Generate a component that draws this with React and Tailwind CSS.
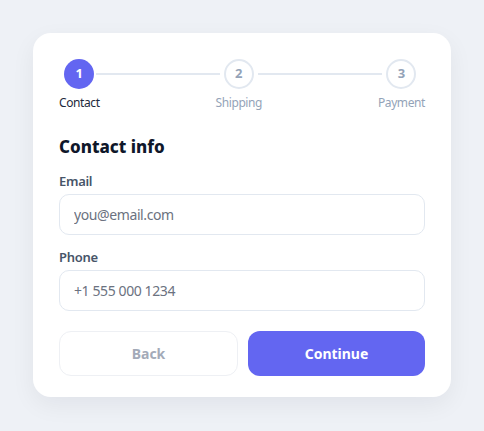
import React, { useState } from "react";

const steps = ["Contact", "Shipping", "Payment"];

function Stepper({ current }) {
  return (
    <div className="flex items-start">
      {steps.map((label, i) => (
        <React.Fragment key={label}>
          {i > 0 && <div className="flex-1 h-[2px] bg-[#e2e8f0] mt-[14px] -mx-[4px]" />}
          <div className="flex flex-col items-center">
            <div
              className={
                i === current
                  ? "w-[30px] h-[30px] rounded-full bg-[#6366f1] text-white text-[13px] font-bold flex items-center justify-center relative"
                  : "w-[30px] h-[30px] rounded-full bg-white border-2 border-[#e2e8f0] text-[#94a3b8] text-[13px] font-bold flex items-center justify-center relative"
              }
            >
              {i + 1}
            </div>
            <span
              className={
                i === current
                  ? "mt-[6px] text-[12px] leading-[16px] tracking-[-0.4px] text-[#1e293b]"
                  : "mt-[6px] text-[12px] leading-[16px] tracking-[-0.4px] text-[#94a3b8]"
              }
            >
              {label}
            </span>
          </div>
        </React.Fragment>
      ))}
    </div>
  );
}

function Field({ label, placeholder, type }) {
  return (
    <div className="flex flex-col">
      <label className="text-[13px] leading-[18px] font-semibold tracking-[-0.3px] text-[#475569] mb-[4px]">
        {label}
      </label>
      <input
        type={type}
        placeholder={placeholder}
        className="h-[41px] rounded-[10px] border border-[#e2e8f0] px-[14px] text-[14px] tracking-[-0.4px] text-[#1e293b] placeholder-[#6b7280] outline-none"
      />
    </div>
  );
}

export default function App() {
  const [step] = useState(0);

  return (
    <div
      className="min-h-[431px] bg-[#eef1f6] pt-[33px] px-[33px]"
      style={{ fontFamily: '"Noto Sans", "Open Sans", sans-serif' }}
    >
      <div className="bg-white rounded-[18px] shadow-[0_8px_24px_rgba(15,23,42,0.06)] pt-[26px] px-[26px] pb-[21px]">
        <Stepper current={step} />

        <h2 className="mt-[24px] text-[17px] leading-[24px] font-extrabold text-[#0f172a]">
          Contact info
        </h2>

        <div className="mt-[13px] flex flex-col gap-[13px]">
          <Field label="Email" placeholder="you@email.com" type="email" />
          <Field label="Phone" placeholder="+1 555 000 1234" type="tel" />
        </div>

        <div className="mt-[20px] flex gap-[10px]">
          <button className="flex-1 h-[45px] rounded-[12px] border border-[#eef0f4] bg-white text-[14px] font-bold text-[#a3aab8]">
            Back
          </button>
          <button className="flex-1 h-[45px] rounded-[12px] bg-[#6366f1] text-[14px] font-bold text-white">
            Continue
          </button>
        </div>
      </div>
    </div>
  );
}
